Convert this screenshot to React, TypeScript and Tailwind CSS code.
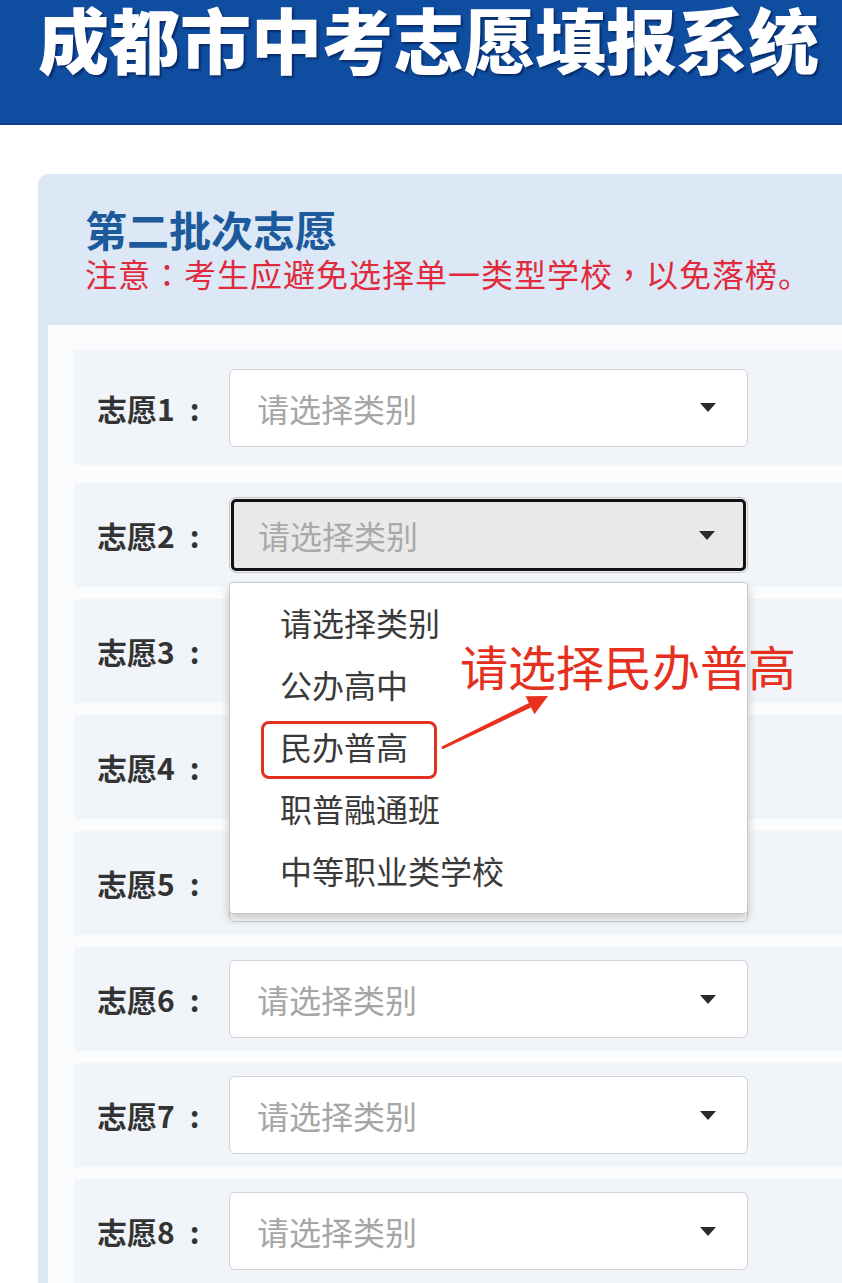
import { useState } from "react";

const ITEMS = ["请选择类别", "公办高中", "民办普高", "职普融通班", "中等职业类学校"];

// centred full-width punctuation, as on the original page
const tc = "font-['Noto_Sans_CJK_TC',sans-serif]";

function Caret() {
  return (
    <svg width="16" height="9" viewBox="0 0 16 9" className="shrink-0">
      <path d="M0 0 L16 0 L8 9 Z" fill="#2b2b2b" />
    </svg>
  );
}

function SelectBox({ focused = false }: { focused?: boolean }) {
  if (focused) {
    return (
      <div className="w-[519px] h-[76px] rounded-[7px] border border-[#c4c4c4] p-[1px]">
        <div className="flex h-full items-center justify-between rounded-[5px] border-[3px] border-[#121212] bg-[#e9e9e9] pl-[24px] pr-[28px]">
          <span className="text-[32px] leading-none text-[#a9a9a9]">请选择类别</span>
          <Caret />
        </div>
      </div>
    );
  }
  return (
    <div className="flex w-[519px] h-[78px] items-center justify-between rounded-[6px] border border-[#cfd3d8] bg-white pl-[27px] pr-[31px]">
      <span className="text-[32px] leading-none text-[#a6a6a6]">请选择类别</span>
      <Caret />
    </div>
  );
}

export default function App() {
  const [open] = useState(true);
  const rows = [1, 2, 3, 4, 5, 6, 7, 8];

  return (
    <div className="relative w-[842px] h-[1283px] overflow-hidden bg-white font-['Noto_Sans_CJK_SC',sans-serif]">
      {/* Header */}
      <div className="h-[128px] bg-[#0e4d9f] pl-[38px] border-b-2 border-[#0b3f86]">
        <h1 className="-mt-[3px] text-[71px] leading-[80px] font-black text-white whitespace-nowrap [text-shadow:2px_2px_2px_rgba(0,0,40,0.45)]">
          成都市中考志愿填报系统
        </h1>
      </div>

      {/* Card */}
      <div className="pt-[49px] pl-[38px]">
        <div className="rounded-tl-[10px] bg-[#dce8f6]">
          <div className="h-[151px] pl-[47px] pt-[30px]">
            <h2 className="text-[42px] leading-[50px] font-bold text-[#1d5a9c]">第二批次志愿</h2>
            <p className="text-[32px] leading-[38px] tracking-[1px] text-[#e12a3c] whitespace-nowrap">
              注意<span className={tc}>：</span>考生应避免选择单一类型学校<span className={tc}>，</span>以免落榜。
            </p>
          </div>

          <div className="ml-[10px] bg-[#fafbfd] pt-[25px] pl-[26px]">
            {rows.map((n) => (
              <div
                key={n}
                className={`relative flex items-center bg-[#f1f4f9] pl-[23px] ${
                  n === 1 ? "h-[115px] mb-[18px]" : "h-[104px] mb-[12px]"
                } ${n === 2 ? "z-10" : ""}`}
              >
                <span className="w-[132px] text-[30px] leading-none font-bold text-[#333] whitespace-nowrap">
                  志愿{n}
                  <span className="ml-[15px]">:</span>
                </span>
                <SelectBox focused={n === 2} />

                {n === 2 && open && (
                  <div className="absolute left-[155px] top-[99px] w-[519px] h-[332px] rounded-[4px] border border-[#c9c9c9] bg-white pt-[8px] shadow-[0_5px_10px_rgba(0,0,0,0.22)]">
                    {ITEMS.map((item) => (
                      <div key={item} className="flex h-[62px] items-center pl-[50px] text-[32px] leading-none text-[#3a3a3a]">
                        {item}
                      </div>
                    ))}
                    <div className="absolute left-[31px] top-[138px] w-[176px] h-[58px] rounded-[8px] border-[3px] border-[#e2301f]" />
                  </div>
                )}
              </div>
            ))}
          </div>
        </div>
      </div>

      {/* Annotation */}
      <div className="absolute z-20 left-[460px] top-[637px] text-[48px] leading-[56px] text-[#e5301e] whitespace-nowrap">
        请选择民办普高
      </div>
      <svg className="absolute z-20 left-0 top-0 pointer-events-none" width="842" height="1283">
        <polygon
          points="441.3,746.7 528.9,703 525.6,696.2 548,696 534.4,714.2 531.1,707.4 442.7,749.3"
          fill="#e8321f"
        />
      </svg>
    </div>
  );
}
